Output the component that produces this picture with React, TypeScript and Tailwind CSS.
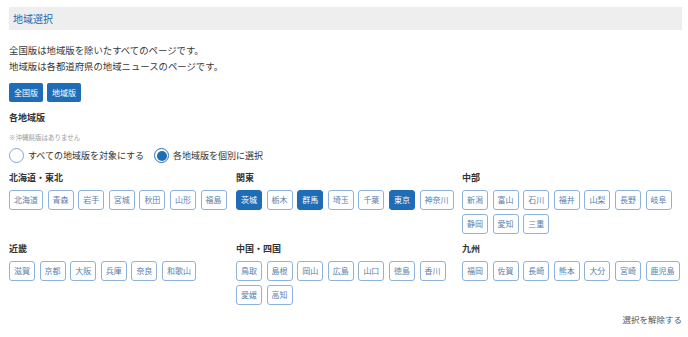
import React from "react";

type Region = { name: string; prefs: string[] };

const regions: Region[] = [
  { name: "北海道・東北", prefs: ["北海道", "青森", "岩手", "宮城", "秋田", "山形", "福島"] },
  { name: "関東", prefs: ["茨城", "栃木", "群馬", "埼玉", "千葉", "東京", "神奈川"] },
  { name: "中部", prefs: ["新潟", "富山", "石川", "福井", "山梨", "長野", "岐阜", "静岡", "愛知", "三重"] },
  { name: "近畿", prefs: ["滋賀", "京都", "大阪", "兵庫", "奈良", "和歌山"] },
  { name: "中国・四国", prefs: ["鳥取", "島根", "岡山", "広島", "山口", "徳島", "香川", "愛媛", "高知"] },
  { name: "九州", prefs: ["福岡", "佐賀", "長崎", "熊本", "大分", "宮崎", "鹿児島"] },
];

const selected = new Set(["茨城", "群馬", "東京"]);

function PrefButton({ name }: { name: string }) {
  const on = selected.has(name);
  return (
    <button
      className={
        on
          ? "h-[20px] rounded-[3px] border border-[#1f6db6] bg-[#1f6db6] px-[4px] text-[8px] leading-none text-white"
          : "h-[20px] rounded-[3px] border border-[#8db2dc] bg-white px-[4px] text-[8px] leading-none text-[#5b7fab]"
      }
    >
      {name}
    </button>
  );
}

function Radio({ checked, label }: { checked: boolean; label: string }) {
  return (
    <label className="flex items-center gap-[4px]">
      {checked ? (
        <span className="flex h-[15px] w-[15px] items-center justify-center rounded-full border border-[#2a6fb8] bg-white">
          <span className="h-[10px] w-[10px] rounded-full bg-[#1f6db6]" />
        </span>
      ) : (
        <span className="h-[15px] w-[15px] rounded-full border border-[#7fa8d8] bg-white" />
      )}
      <span className="text-[9px] leading-none text-[#333]">{label}</span>
    </label>
  );
}

export default function App() {
  return (
    <div
      className="w-[688px] h-[337px] bg-white pl-[9px] pr-[6px] pt-[7px] overflow-hidden"
      style={{ fontFamily: '"Noto Sans CJK JP", "Noto Sans", sans-serif' }}
    >
      <div className="flex h-[23px] items-center bg-[#eeeeee] pl-[4px]">
        <span className="text-[10px] leading-none text-[#2766b0]">地域選択</span>
      </div>

      <div className="mt-[12px] text-[9.4px] leading-[16px] text-[#383838]">
        <p>全国版は地域版を除いたすべてのページです。</p>
        <p>地域版は各都道府県の地域ニュースのページです。</p>
      </div>

      <div className="mt-[9px] flex gap-[4px]">
        <button className="h-[19px] w-[34px] rounded-[2px] bg-[#1f6db6] text-[8px] leading-none text-white">全国版</button>
        <button className="h-[19px] w-[34px] rounded-[2px] bg-[#1f6db6] text-[8px] leading-none text-white">地域版</button>
      </div>

      <div className="mt-[9px] text-[9px] leading-[14px] font-bold text-[#333]">各地域版</div>
      <div className="mt-[7px] text-[6.5px] leading-[10px] text-[#999]">※沖縄県版はありません</div>

      <div className="mt-[6px] flex items-center gap-[10px]">
        <Radio checked={false} label="すべての地域版を対象にする" />
        <Radio checked={true} label="各地域版を個別に選択" />
      </div>

      <div className="mt-[8px] grid grid-cols-[227px_226px_1fr] gap-y-[8px]">
        {regions.map((r) => (
          <div key={r.name}>
            <div className="text-[9px] leading-[14px] font-bold text-[#333]">{r.name}</div>
            <div className="mt-[5px] flex flex-wrap gap-x-[4.6px] gap-y-[4px]">
              {r.prefs.map((p) => (
                <PrefButton key={p} name={p} />
              ))}
            </div>
          </div>
        ))}
      </div>

      <div className="mt-[8px] flex justify-end">
        <span className="text-[8.5px] leading-[12px] text-[#555]">選択を解除する</span>
      </div>
    </div>
  );
}
